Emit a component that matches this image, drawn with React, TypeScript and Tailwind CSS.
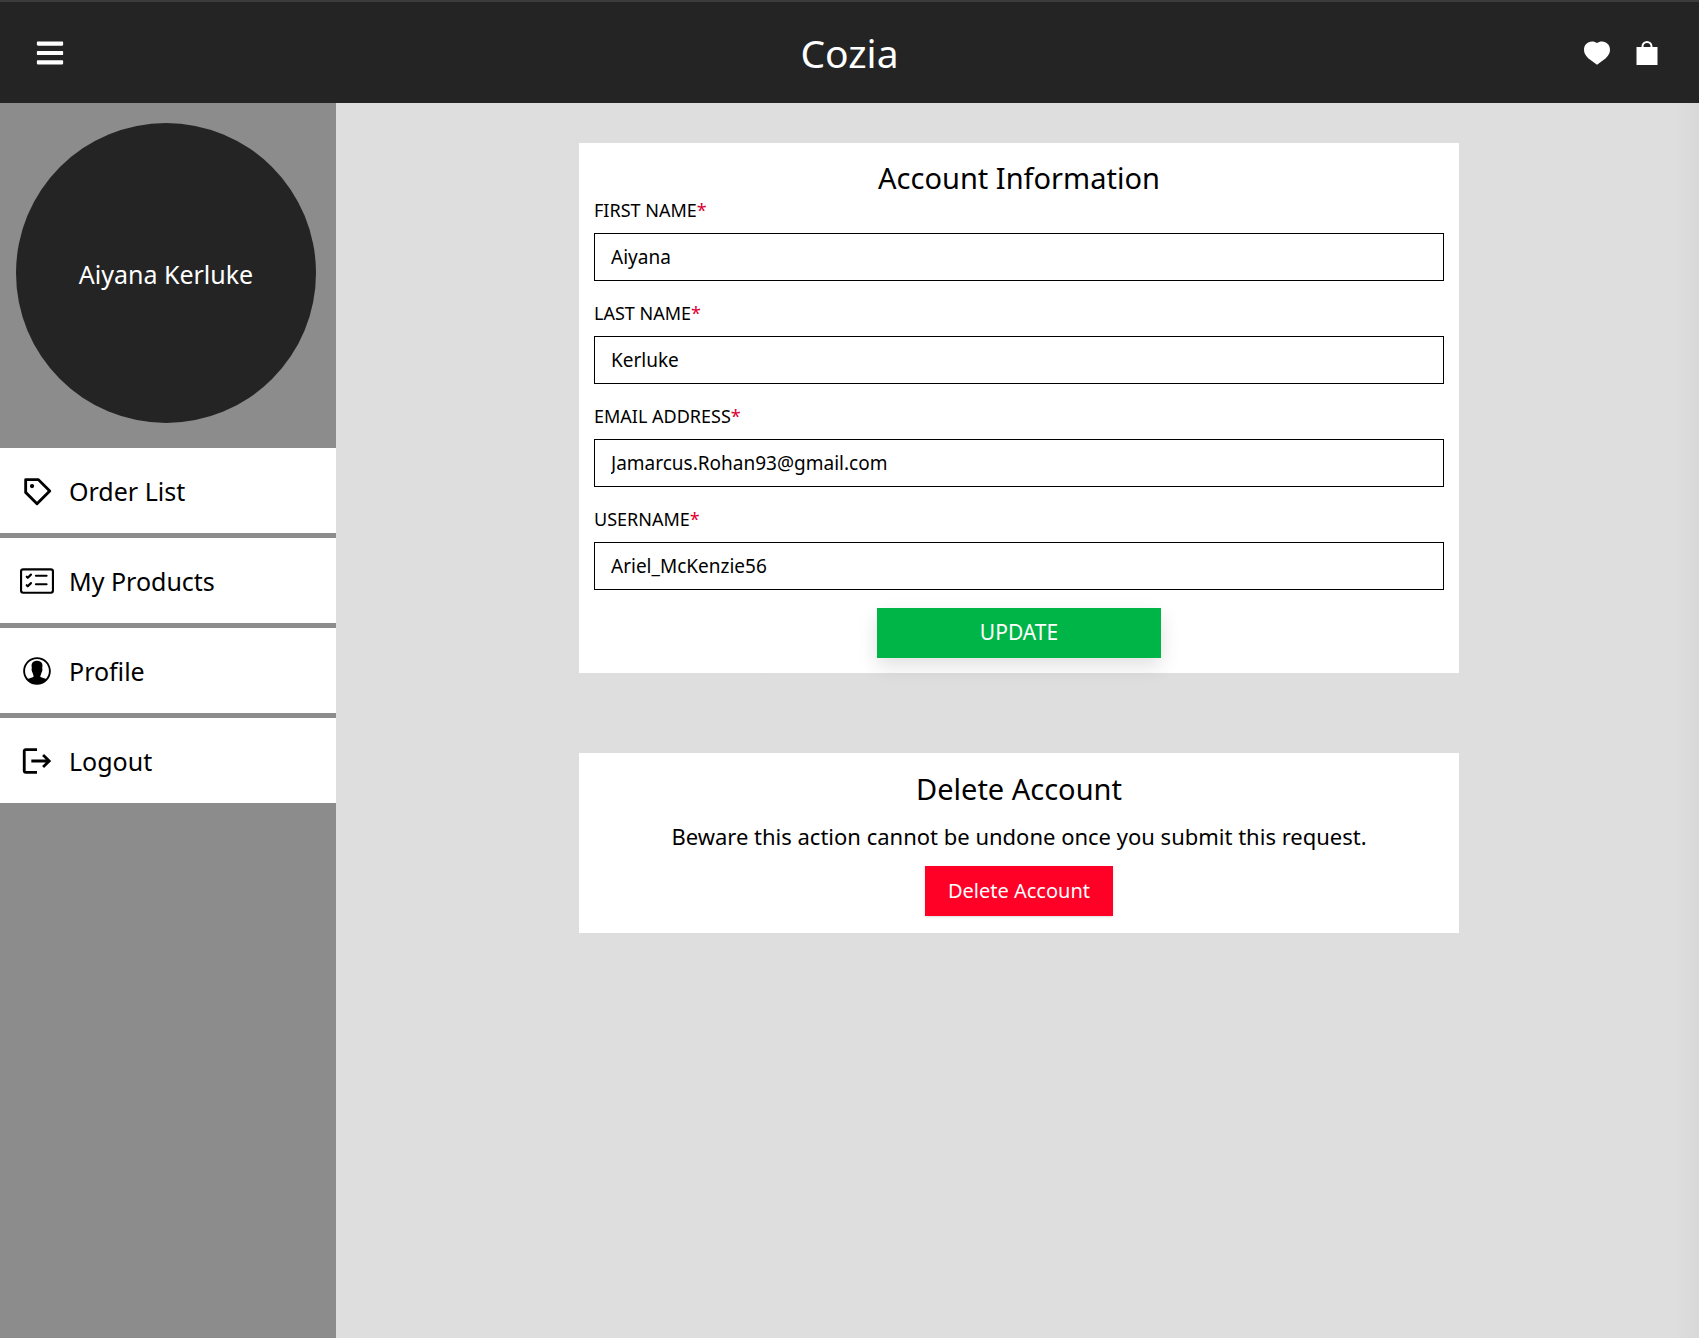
import type { ComponentType } from "react";
import { BiPurchaseTag } from "react-icons/bi";
import { BsCardChecklist } from "react-icons/bs";
import { FaBars } from "react-icons/fa";
import { IoIosContact } from "react-icons/io";
import { MdLogout } from "react-icons/md";

type IconType = ComponentType<{ size?: number; className?: string }>;

const links: { label: string; Icon: IconType }[] = [
  { label: "Order List", Icon: BiPurchaseTag },
  { label: "My Products", Icon: BsCardChecklist },
  { label: "Profile", Icon: IoIosContact },
  { label: "Logout", Icon: MdLogout },
];

const fields = [
  { id: "first-name", label: "FIRST NAME", type: "text", value: "Aiyana" },
  { id: "last-name", label: "LAST NAME", type: "text", value: "Kerluke" },
  { id: "email", label: "EMAIL ADDRESS", type: "email", value: "Jamarcus.Rohan93@gmail.com" },
  { id: "username", label: "USERNAME", type: "text", value: "Ariel_McKenzie56" },
];

function HeartIcon() {
  return (
    <svg width="26" height="24" viewBox="0 0 26 24" fill="currentColor" aria-hidden="true">
      <path d="M13 2.1C14.3 1 16 .5 18 .5c4.700 0 8 3.600 8 8.300 0 3-1.300 5.600-4.200 8.400L13 23.700 4.200 17.200C1.300 14.400 0 11.800 0 8.800 0 4.100 3.300.5 8 .5c2 0 3.700.5 5 1.600z" />
    </svg>
  );
}

function BagIcon() {
  return (
    <svg width="22" height="26" viewBox="0 0 22 26" fill="none" aria-hidden="true">
      <path d="M0.500 7h21v18h-21z" fill="currentColor" />
      <path d="M6.500 8V6.500a4.500 4.500 0 0 1 9 0V8" stroke="currentColor" strokeWidth="2" />
    </svg>
  );
}

function Header() {
  return (
    <header className="grid h-[103px] grid-cols-3 items-center border-t-2 border-[#3c3c3c] bg-[#242424] px-[35px] text-white">
      <button type="button" aria-label="Menu" className="justify-self-start">
        <FaBars size={30} />
      </button>
      <a href="#" className="justify-self-center text-[39px] leading-none">
        Cozia
      </a>
      <div className="flex items-center gap-[26px] justify-self-end pr-[6px]">
        <a href="#" aria-label="Favourites">
          <HeartIcon />
        </a>
        <a href="#" aria-label="Shopping bag">
          <BagIcon />
        </a>
      </div>
    </header>
  );
}

function Sidebar() {
  return (
    <aside className="w-[336px] shrink-0 bg-[#8c8c8c]">
      <div className="mx-4 mt-5 mb-[25px] flex size-[300px] items-center justify-center rounded-full bg-[#242424] pt-1 text-[25px] text-white">
        Aiyana Kerluke
      </div>
      <nav className="flex flex-col gap-[5px]">
        {links.map(({ label, Icon }) => (
          <a key={label} href="#" className="flex h-[85px] items-center gap-[15px] bg-white pl-5 text-[25px]">
            <Icon size={34} />
            <span className="pt-0.5">{label}</span>
          </a>
        ))}
      </nav>
    </aside>
  );
}

export default function App() {
  return (
    <div className="flex min-h-screen flex-col overflow-x-hidden bg-[#dedede] font-['Noto_Sans',sans-serif] text-black">
      <Header />
      <div className="flex flex-1">
        <Sidebar />
        <main className="flex min-w-0 flex-1 flex-col items-center gap-20 bg-linear-to-l from-[#d8d8d8] to-[#dedede] to-[24px] py-10 pr-4 pl-[19px]">
          <form className="flex w-full max-w-[880px] flex-col bg-white p-[15px]" onSubmit={(e) => e.preventDefault()}>
            <h1 className="text-center text-[29px] leading-[40px]">Account Information</h1>
            <div className="flex flex-col gap-5">
              {fields.map(({ id, label, type, value }) => (
                <div key={id} className="flex flex-col gap-2.5">
                  <label htmlFor={id} className="text-[18px] leading-[25px]">
                    {label}
                    <span className="text-[#dc0032]">*</span>
                  </label>
                  <input
                    id={id}
                    type={type}
                    defaultValue={value}
                    className="h-12 w-full border border-black bg-white px-4 text-[19px]"
                  />
                </div>
              ))}
            </div>
            <button
              type="submit"
              className="mt-[18px] h-[50px] w-1/3 self-center bg-[#00b548] text-[21px] text-white shadow-[0_8px_20px_rgba(0,0,0,0.12)]"
            >
              UPDATE
            </button>
          </form>
          <section className="flex w-full max-w-[880px] flex-col items-center bg-white px-[15px] pt-[15px] pb-[17px]">
            <h2 className="text-[29px] leading-[42px]">Delete Account</h2>
            <p className="mt-1.5 mb-2.5 text-[22px] leading-[40px]">
              Beware this action cannot be undone once you submit this request.
            </p>
            <button type="button" className="h-[50px] bg-[#ff0026] px-[23px] text-[20px] text-white shadow-sm">
              Delete Account
            </button>
          </section>
        </main>
      </div>
    </div>
  );
}
